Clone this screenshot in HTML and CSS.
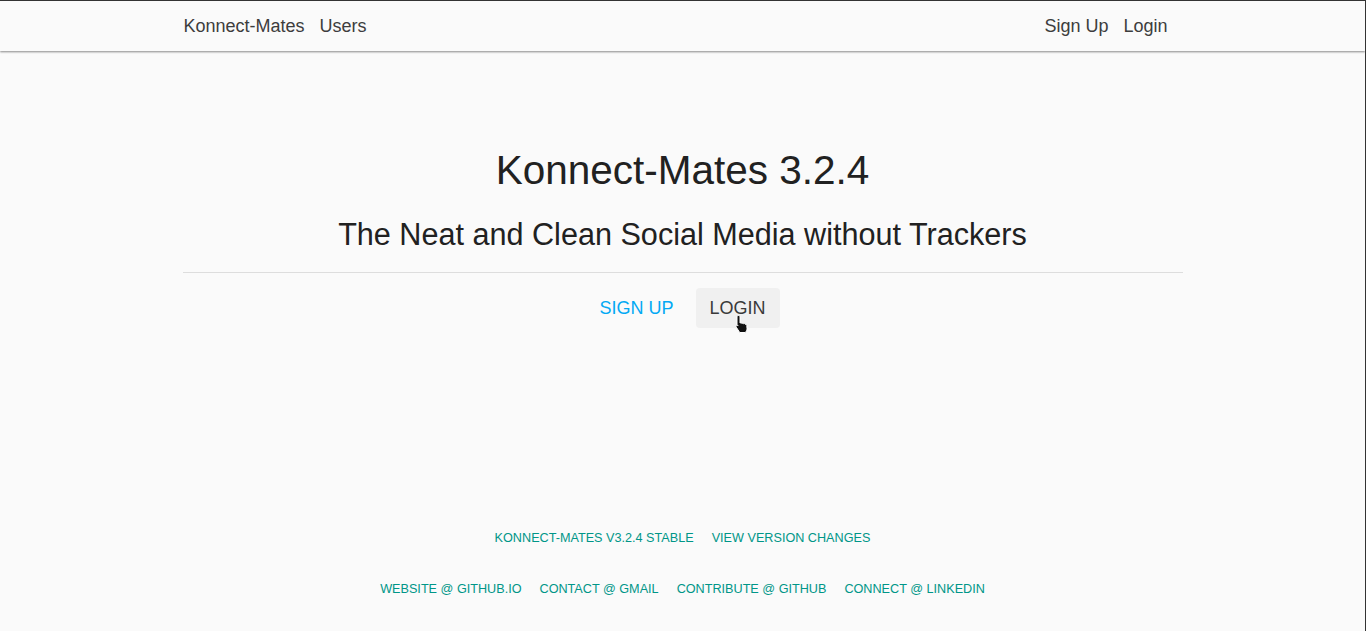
FILE: index.html
```html
<!DOCTYPE html>
<html lang="en">
<head>
<meta charset="utf-8">
<title>Konnect-Mates</title>
<link rel="stylesheet" href="styles.css">
</head>
<body>
<div class="frame">
  <nav class="navbar">
    <div class="container nav-inner">
      <div class="nav-group">
        <a class="nav-link" href="#">Konnect-Mates</a>
        <a class="nav-link" href="#">Users</a>
      </div>
      <div class="nav-group">
        <a class="nav-link" href="#">Sign Up</a>
        <a class="nav-link" href="#">Login</a>
      </div>
    </div>
  </nav>
  <main class="container hero">
    <h1 class="title">Konnect-Mates 3.2.4</h1>
    <h2 class="subtitle">The Neat and Clean Social Media without Trackers</h2>
    <hr class="divider">
    <div class="actions">
      <a class="btn btn-primary" href="#">Sign Up</a>
      <a class="btn btn-hover" href="#">Login
        <svg class="cursor" width="16" height="20" viewBox="0 0 16 20" aria-hidden="true">
          <path d="M4.5 1.5c.8 0 1.5.6 1.5 1.4V9l.4-.1c.6-.2 1.3.1 1.5.6.5-.4 1.3-.3 1.7.2.5-.3 1.2-.2 1.6.3l.3.4c.6-.1 1.2.3 1.3.9l.2 3.2c0 1.6-.7 3-1.9 4H5.7L2.3 13.2c-.4-.6-.3-1.3.3-1.7.5-.3 1.1-.2 1.5.2L3 10.6V2.9c0-.8.7-1.4 1.5-1.4z" fill="#111" stroke="#fff" stroke-width="1"/>
        </svg>
      </a>
    </div>
  </main>
  <footer class="footer">
    <div class="footer-row">
      <a href="#">Konnect-Mates v3.2.4 Stable</a>
      <a href="#">View Version Changes</a>
    </div>
    <div class="footer-row">
      <a href="#">Website @ github.io</a>
      <a href="#">Contact @ gmail</a>
      <a href="#">Contribute @ github</a>
      <a href="#">Connect @ linkedin</a>
    </div>
  </footer>
</div>
</body>
</html>
```
FILE: styles.css
```css
* { box-sizing: border-box; }
html, body { margin: 0; padding: 0; }
body {
  background: #fafafa;
  font-family: "Liberation Sans", Arial, sans-serif;
  color: rgba(0,0,0,0.87);
}
.frame {
  height: 631px;
  border-top: 1px solid #333;
  border-right: 1px solid #333;
  display: flex;
  flex-direction: column;
  overflow: hidden;
}
.container {
  width: 1000px;
  margin: 0 auto;
}
.navbar {
  height: 50px;
  background: #fafafa;
  box-shadow: 0 1px 2px rgba(0,0,0,0.45);
  position: relative;
  z-index: 1;
}
.nav-inner {
  height: 100%;
  display: flex;
  justify-content: space-between;
  align-items: center;
  padding: 0 15px 0 1px;
}
.nav-group { display: flex; gap: 15px; }
.nav-link {
  font-size: 18px;
  color: #3d3d3d;
  text-decoration: none;
  line-height: 24px;
}
.hero {
  display: flex;
  flex-direction: column;
  align-items: center;
  padding-top: 95px;
}
.title {
  margin: 0;
  font-size: 40.5px;
  font-weight: 400;
  line-height: 48px;
  color: #212121;
}
.subtitle {
  margin: 22px 0 0;
  font-size: 30.6px;
  font-weight: 400;
  line-height: 36px;
  color: #212121;
}
.divider {
  width: 100%;
  margin: 20px 0 0;
  border: 0;
  border-top: 1px solid #ddd;
}
.actions {
  display: flex;
  gap: 8px;
  margin-top: 15px;
}
.btn {
  position: relative;
  display: inline-block;
  height: 40px;
  line-height: 40px;
  padding: 0 14px;
  font-size: 18px;
  text-transform: uppercase;
  text-decoration: none;
  border-radius: 4px;
}
.btn-primary { color: #03a9f4; }
.btn-hover { color: #3a3a3a; background: #f0f0f0; }
.cursor {
  position: absolute;
  left: 38px;
  top: 26px;
}
.footer {
  margin-top: auto;
  padding-bottom: 34px;
  display: flex;
  flex-direction: column;
  align-items: center;
  gap: 36px;
}
.footer-row {
  display: flex;
  gap: 18px;
}
.footer-row a {
  font-size: 12.65px;
  line-height: 15px;
  color: #009688;
  text-transform: uppercase;
  text-decoration: none;
}
```
